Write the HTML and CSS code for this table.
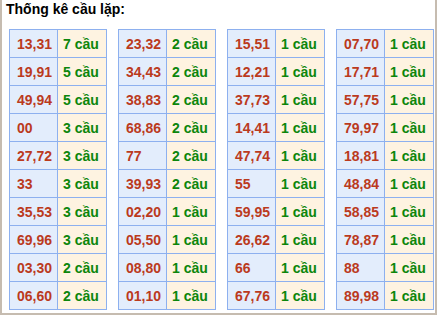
FILE: index.html
```html
<!DOCTYPE html>
<html>
<head>
<meta charset="utf-8">
<link rel="stylesheet" href="styles.css">
</head>
<body>
<div class="frame">
  <div class="title">Thống kê cầu lặp:</div>
  <div class="tables">
    <table class="stat">
      <tr><td class="num">13,31</td><td class="cnt">7 cầu</td></tr>
      <tr><td class="num">19,91</td><td class="cnt">5 cầu</td></tr>
      <tr><td class="num">49,94</td><td class="cnt">5 cầu</td></tr>
      <tr><td class="num">00</td><td class="cnt">3 cầu</td></tr>
      <tr><td class="num">27,72</td><td class="cnt">3 cầu</td></tr>
      <tr><td class="num">33</td><td class="cnt">3 cầu</td></tr>
      <tr><td class="num">35,53</td><td class="cnt">3 cầu</td></tr>
      <tr><td class="num">69,96</td><td class="cnt">3 cầu</td></tr>
      <tr><td class="num">03,30</td><td class="cnt">2 cầu</td></tr>
      <tr><td class="num">06,60</td><td class="cnt">2 cầu</td></tr>
    </table>
    <table class="stat">
      <tr><td class="num">23,32</td><td class="cnt">2 cầu</td></tr>
      <tr><td class="num">34,43</td><td class="cnt">2 cầu</td></tr>
      <tr><td class="num">38,83</td><td class="cnt">2 cầu</td></tr>
      <tr><td class="num">68,86</td><td class="cnt">2 cầu</td></tr>
      <tr><td class="num">77</td><td class="cnt">2 cầu</td></tr>
      <tr><td class="num">39,93</td><td class="cnt">2 cầu</td></tr>
      <tr><td class="num">02,20</td><td class="cnt">1 cầu</td></tr>
      <tr><td class="num">05,50</td><td class="cnt">1 cầu</td></tr>
      <tr><td class="num">08,80</td><td class="cnt">1 cầu</td></tr>
      <tr><td class="num">01,10</td><td class="cnt">1 cầu</td></tr>
    </table>
    <table class="stat">
      <tr><td class="num">15,51</td><td class="cnt">1 cầu</td></tr>
      <tr><td class="num">12,21</td><td class="cnt">1 cầu</td></tr>
      <tr><td class="num">37,73</td><td class="cnt">1 cầu</td></tr>
      <tr><td class="num">14,41</td><td class="cnt">1 cầu</td></tr>
      <tr><td class="num">47,74</td><td class="cnt">1 cầu</td></tr>
      <tr><td class="num">55</td><td class="cnt">1 cầu</td></tr>
      <tr><td class="num">59,95</td><td class="cnt">1 cầu</td></tr>
      <tr><td class="num">26,62</td><td class="cnt">1 cầu</td></tr>
      <tr><td class="num">66</td><td class="cnt">1 cầu</td></tr>
      <tr><td class="num">67,76</td><td class="cnt">1 cầu</td></tr>
    </table>
    <table class="stat">
      <tr><td class="num">07,70</td><td class="cnt">1 cầu</td></tr>
      <tr><td class="num">17,71</td><td class="cnt">1 cầu</td></tr>
      <tr><td class="num">57,75</td><td class="cnt">1 cầu</td></tr>
      <tr><td class="num">79,97</td><td class="cnt">1 cầu</td></tr>
      <tr><td class="num">18,81</td><td class="cnt">1 cầu</td></tr>
      <tr><td class="num">48,84</td><td class="cnt">1 cầu</td></tr>
      <tr><td class="num">58,85</td><td class="cnt">1 cầu</td></tr>
      <tr><td class="num">78,87</td><td class="cnt">1 cầu</td></tr>
      <tr><td class="num">88</td><td class="cnt">1 cầu</td></tr>
      <tr><td class="num">89,98</td><td class="cnt">1 cầu</td></tr>
    </table>
  </div>
</div>
</body>
</html>
```
FILE: styles.css
```css
html, body {
  margin: 0;
  padding: 0;
  background: #ffffff;
}
body {
  font-family: "Liberation Sans", Arial, sans-serif;
}
.frame {
  box-sizing: border-box;
  width: 437px;
  height: 315px;
  border-left: 2px solid #c6bcb0;
  border-right: 2px solid #c6bcb0;
  border-bottom: 2px solid #c6bcb0;
  background: #ffffff;
}
.title {
  font-size: 14px;
  font-weight: bold;
  line-height: 16px;
  color: #000000;
  padding: 1px 0 0 4px;
  height: 28px;
  box-sizing: border-box;
}
.tables {
  display: flex;
  gap: 11px;
  padding-left: 7px;
  padding-top: 1px;
}
.stat {
  border-collapse: collapse;
  width: 98px;
  table-layout: fixed;
}
.stat td {
  border: 1px solid #8db0ef;
  height: 28px;
  padding: 0 0 0 7px;
  font-size: 14px;
  font-weight: bold;
  box-sizing: border-box;
  line-height: 16px;
  white-space: nowrap;
}
.stat td.num {
  width: 48px;
  background: #e3edfc;
  color: #bb3a1d;
}
.stat td.cnt {
  background: #fef3e1;
  color: #0c860c;
  padding-left: 5px;
}
```
